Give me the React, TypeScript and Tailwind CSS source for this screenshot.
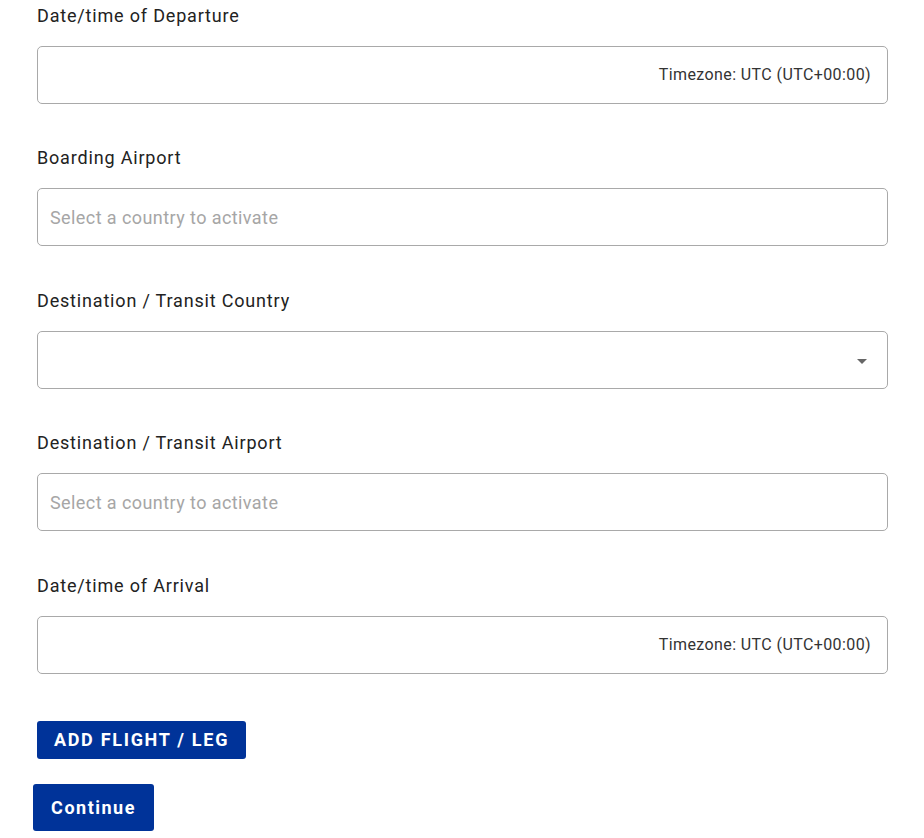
import React from "react";

const Label = ({ children }: { children: React.ReactNode }) => (
  <div className="h-[30px] pt-[1px] leading-[30px] text-[18px] text-[#222] tracking-[0.82px]">{children}</div>
);

const Box = ({ children, className = "" }: { children?: React.ReactNode; className?: string }) => (
  <div className={`mt-[16px] h-[58px] rounded-[5px] border border-[#a9a9a9] flex items-center ${className}`}>{children}</div>
);

export default function App() {
  return (
    <div className="w-[924px] h-[838px] bg-white overflow-hidden" style={{ fontFamily: "Roboto, 'Liberation Sans', sans-serif" }}>
      <div className="pl-[37px] pr-[36px]">
        <div className="mb-[38px]">
          <Label>Date/time of Departure</Label>
          <Box className="justify-end pr-[16px]">
            <span className="text-[16px] text-[#333] tracking-[0.4px]">Timezone: UTC (UTC+00:00)</span>
          </Box>
        </div>
        <div className="mb-[38.5px]">
          <Label>Boarding Airport</Label>
          <Box className="pl-[12px]">
            <span className="text-[18px] text-[#a6a6a6] tracking-[0.42px]">Select a country to activate</span>
          </Box>
        </div>
        <div className="mb-[38.5px]">
          <Label>Destination / Transit Country</Label>
          <Box className="justify-end pr-[20px]">
            <svg width="10" height="5" viewBox="0 0 10 5" className="mt-[3px]">
              <path d="M0 0 L10 0 L5 5 Z" fill="#666" />
            </svg>
          </Box>
        </div>
        <div className="mb-[38.5px]">
          <Label>Destination / Transit Airport</Label>
          <Box className="pl-[12px]">
            <span className="text-[18px] text-[#a6a6a6] tracking-[0.42px]">Select a country to activate</span>
          </Box>
        </div>
        <div>
          <Label>Date/time of Arrival</Label>
          <Box className="justify-end pr-[16px]">
            <span className="text-[16px] text-[#333] tracking-[0.4px]">Timezone: UTC (UTC+00:00)</span>
          </Box>
        </div>
        <div className="mt-[47px]">
          <button className="h-[38px] w-[209px] rounded-[3px] bg-[#003399] text-white text-[18px] font-bold tracking-[1.7px] flex items-center justify-center">
            ADD FLIGHT / LEG
          </button>
        </div>
      </div>
      <div className="pl-[33px] mt-[25px]">
        <button className="h-[47px] w-[121px] rounded-[3px] bg-[#003399] text-white text-[18px] font-bold tracking-[1.5px] flex items-center justify-center">
          Continue
        </button>
      </div>
    </div>
  );
}
